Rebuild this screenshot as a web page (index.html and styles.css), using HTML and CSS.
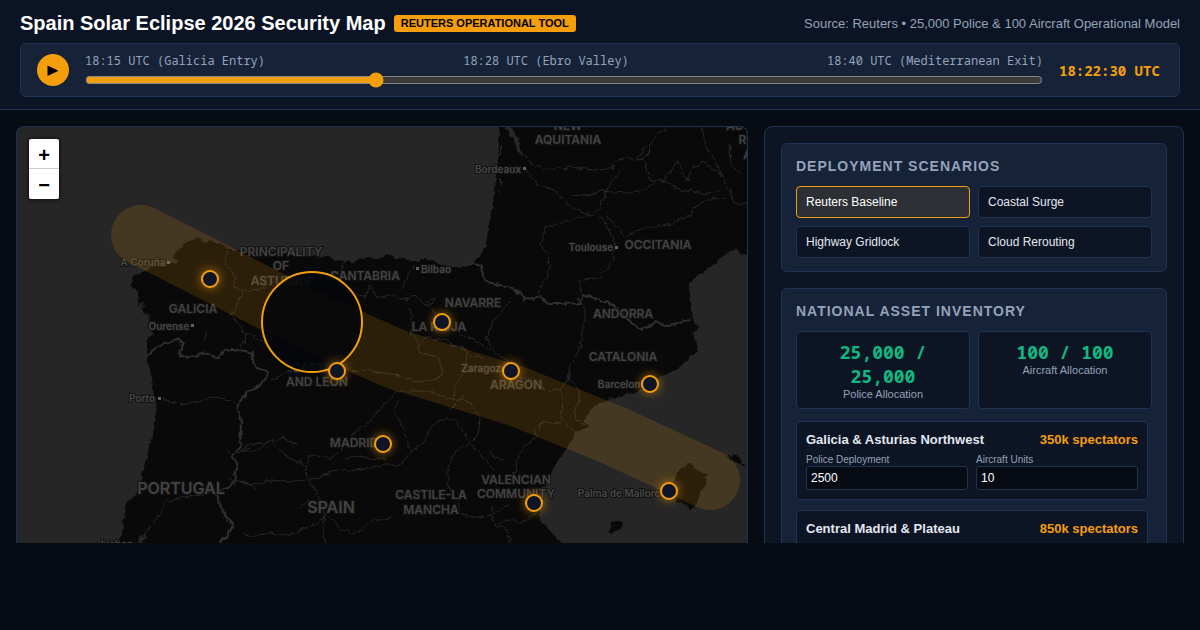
FILE: index.html
```html
<!DOCTYPE html>
<html lang="en">
<head>
<meta charset="utf-8">
<meta name="viewport" content="width=device-width, initial-scale=1">
<title>Spain Solar Eclipse 2026 Security Map</title>
<link rel="stylesheet" href="styles.css">
</head>
<body>
<header class="header">
  <div class="title-row">
    <div class="brand">
      <h1 class="title">Spain Solar Eclipse 2026 Security Map</h1>
      <span class="badge">REUTERS OPERATIONAL TOOL</span>
    </div>
    <p class="source">Source: Reuters • 25,000 Police &amp; 100 Aircraft Operational Model</p>
  </div>
  <div class="timeline">
    <button class="play" type="button" aria-label="Play"><svg width="12" height="12" viewBox="0 0 12 12"><path d="M0.5 1.500v10.500L11.500 6.700z"/></svg></button>
    <div class="track">
      <div class="stops">
        <span>18:15 UTC (Galicia Entry)</span>
        <span>18:28 UTC (Ebro Valley)</span>
        <span>18:40 UTC (Mediterranean Exit)</span>
      </div>
      <input class="slider" type="range" min="0" max="100" value="30" aria-label="Time">
    </div>
    <output class="clock">18:22:30 UTC</output>
  </div>
</header>
<main class="main">
  <section class="map-panel" aria-label="Map">
    <svg class="map" viewBox="17 127 730 480">
      <defs>
        <filter id="rough" x="0" y="0" width="1" height="1" color-interpolation-filters="sRGB">
          <feTurbulence type="fractalNoise" baseFrequency="0.16" numOctaves="2" seed="4"/>
          <feDisplacementMap in="SourceGraphic" scale="6" xChannelSelector="R" yChannelSelector="G"/>
        </filter>
        <filter id="glow" x="-1" y="-1" width="3" height="3"><feGaussianBlur stdDeviation="5"/></filter>
        <g id="pin">
          <circle r="10" class="pin-glow" filter="url(#glow)"/>
          <circle r="8" class="pin-dot"/>
        </g>
      </defs>
      <rect class="water" x="17" y="127" width="730" height="480"/>
      <g filter="url(#rough)">
        <rect x="0" y="100" width="780" height="520" fill="none"/>
        <path class="land" d="M500 110L499 140 498 160 495 182 493 205 490 225 486 243 480 256 473 264 460 267 440 265 433 260 423 258 417 263 407 259 395 258 388 254 378 259 367 258 357 261 343 261 327 257 305 256 270 252 240 252 233 250 217 243 212 239 205 242 200 238 193 240 183 243 180 249 173 255 177 262 171 264 158 265 147 269 143 272 135 275 130 286 138 291 138 306 146 300 141 311 150 316 147 324 152 334 147 340 147 362 150 368 152 388 157 407 152 433 147 457 140 482 137 493 125 505 126 512 123 523 120 540 116 620H590L562 543 552 533 543 523 540 517 539 507 542 490 552 470 557 462 567 450 575 433 589 426 583 422 590 412 598 404 613 398 637 392 650 384 660 377 677 369 690 358 697 350 695 340 693 333 700 328 694 323 693 317 689 302 689 283 697 275 712 267 720 258 736 248 740 254 760 255V110z"/>
        <path class="land" d="M672 482L680 469 690 462 693 467 697 471 707 473 706 483 698 498 692 510 686 505 677 502 677 494 670 492zM725 457L737 455 746 467 738 463zM607 532L612 523 623 521 621 527 612 534z"/>
        <path class="inlet" d="M503 122L512 129 519 140 520 151 528 160 518 153 515 143z"/>
        <path class="inlet" d="M499 176L504 182 500 185zM498 190L501 191 498 194zM137 543L141 535 145 538 141 546zM500 145l2-1v10l-2 1z"/>
        <path class="region" d="M525 158L535 166 543 169 570 167 595 170 612 169 615 161 628 158 637 160 645 159 652 144 657 132 665 132 665 120M637 159L643 149 652 144M645 159L650 180 663 181 672 167 679 162 682 170 687 181 692 168 705 162 712 169 722 175 729 190 736 204 747 204M702 127L706 147 715 160 722 175M527 171L537 184 553 189 565 200 572 208 591 215 600 207 610 183 620 170M572 197L582 195 595 193 606 190M597 191L630 193 645 189 655 182M663 181L680 190 705 194 722 190M589 215L565 222 545 227 541 246 548 255 550 270 545 279 538 293M600 217L607 225 612 236 617 247 610 265 600 277 578 281 583 295M607 217L625 236 642 228 668 225 690 215 697 205 710 199 725 198M730 144L731 166 742 173"/>
        <path class="region" d="M578 299L584 307 584 328 579 352 570 364 568 380 560 390 548 391 540 385 525 378 516 374 508 360 495 353 486 338 493 320 501 313 512 297M560 390L563 402 561 418 567 425 575 432M568 380L578 387 580 398 574 410 577 420 585 426M561 424L545 422 535 428 536 438 523 448 515 463 517 472 508 476M538 430L543 420"/>
        <path class="region" d="M228 250L225 262 235 275 234 287 243 291 237 304 231 315 240 325 246 335 240 350 234 352M243 291L260 289 272 283 283 286M240 330L258 340 285 348M345 260L342 270 331 276 340 282 350 293 365 298 370 285 378 298 390 295 403 300 415 295 420 300M402 290L407 275 415 265M420 300L432 310 440 318 454 328M425 302L435 298 433 305 427 305M454 328L460 335 475 340 490 350M410 309L412 325 411 333 418 342 430 337 450 342 461 348 470 356 485 358M420 343L418 352 440 358 443 370 440 378 420 382 400 376 370 370 350 371M300 364L282 375 272 380M452 344L466 350 467 368 454 385 455 400 425 391 397 391 391 399 377 410 370 421 355 432 350 442 330 458 310 455 306 466M397 400L394 412 402 425 407 440 411 452 400 465 386 465 355 470 330 472 315 479 309 480M455 402L465 398 475 410 480 420 478 435 470 443 462 430 456 420 440 420 428 430 425 442 410 452M470 443L480 455 488 462 494 470M470 443L455 451 448 470 448 485 458 500 460 515 480 518 497 513 510 502M386 460L360 456 345 459M306 466L307 479 290 482 270 480 255 485 240 481 227 479M306 466L285 455 270 440 258 450 243 453M309 480L320 500 325 515 335 522 342 530 360 533 370 520 385 520 390 518M325 516L315 524 290 535 270 533 250 537 243 532M325 516L322 532 326 543M494 507L492 520 498 525 507 520 520 523 540 512M498 526L508 531 510 543M488 450L495 458 505 460M227 452L238 453 250 444 266 443 282 438 297 445M163 399L180 404 205 400 212 396 228 400 238 404M239 452L250 448M207 331L204 341"/>
        <path class="region" d="M231 484L245 481 257 490M144 538L150 526 160 515 167 501 185 498 210 492M309 500L300 508M450 410L465 395"/>
        <path class="border" d="M468 264L480 265 487 282 500 285 515 289 525 300 540 296 548 304 560 304 581 303 583 294 600 300 615 306 625 318 642 330 655 322 668 326 690 319M147 356L158 346 168 343 178 339 183 344 180 356 190 357 205 353 218 358 225 350 240 350 252 353 254 366 268 373 260 385 247 392 238 404 241 420 240 448 232 455 238 465 233 483 228 488 215 492 220 505 228 520 233 525 228 535 220 543 210 560"/>
      </g>
      <g class="labels">
        <g class="region-name">
          <text x="568" y="130">NEW</text><text x="568" y="144">AQUITANIA</text>
          <text x="739" y="130">AUV</text><text x="747" y="144">RH</text><text x="751" y="159">AL</text>
          <text x="658" y="249">OCCITANIA</text><text x="623" y="318">ANDORRA</text>
          <text x="623" y="361">CATALONIA</text><text x="516" y="389">ARAGON</text>
          <text x="473" y="307">NAVARRE</text><text x="439" y="331">LA RIOJA</text>
          <text x="365" y="280">CANTABRIA</text>
          <text x="281" y="256">PRINCIPALITY</text><text x="281" y="270">OF</text><text x="281" y="285">ASTURIAS</text>
          <text x="193" y="313">GALICIA</text>
          <text x="317" y="372">CASTILE</text><text x="317" y="386">AND LEÓN</text>
          <text x="354" y="447">MADRID</text>
          <text x="431" y="499">CASTILE-LA</text><text x="431" y="514">MANCHA</text>
          <text x="516" y="484">VALENCIAN</text><text x="516" y="498">COMMUNITY</text>
        </g>
        <g class="country-name"><text x="181" y="494">PORTUGAL</text><text x="331" y="513">SPAIN</text></g>
        <g class="city-name">
          <text x="498" y="173">Bordeaux</text><text x="591" y="251">Toulouse</text><text x="436" y="273">Bilbao</text>
          <text x="143" y="266">A Coruña</text><text x="169" y="330">Ourense</text><text x="142" y="402">Porto</text>
          <text x="484" y="372">Zaragoza</text><text x="622" y="388">Barcelona</text>
          <text x="622" y="497">Palma de Mallorca</text><text x="117" y="548">Lisbon</text>
        </g>
        <path class="city-dot" d="M523 167h3v3h-3zM615 246h3v3h-3zM416 267h3v3h-3zM167 261h3v3h-3zM191 324h3v3h-3zM158 397h3v3h-3z"/>
      </g>
      <path class="corridor" d="M141 235L312 322 395 359 516 396 615 436 710 480"/>
      <circle class="umbra" cx="312" cy="322" r="50"/>
      <use href="#pin" x="210" y="279"/><use href="#pin" x="442" y="322"/>
      <use href="#pin" x="337" y="371"/><use href="#pin" x="511" y="371"/>
      <use href="#pin" x="650" y="384"/><use href="#pin" x="383" y="444"/>
      <use href="#pin" x="534" y="503"/><use href="#pin" x="669" y="491"/>
    </svg>
    <div class="zoom">
      <button class="zoom-btn" type="button" aria-label="Zoom in">+</button>
      <button class="zoom-btn" type="button" aria-label="Zoom out">−</button>
    </div>
  </section>
  <aside class="side">
    <section class="card">
      <h2 class="card-title">DEPLOYMENT SCENARIOS</h2>
      <div class="pair">
        <button class="scenario active" type="button">Reuters Baseline</button>
        <button class="scenario" type="button">Coastal Surge</button>
        <button class="scenario" type="button">Highway Gridlock</button>
        <button class="scenario" type="button">Cloud Rerouting</button>
      </div>
    </section>
    <section class="card">
      <h2 class="card-title">NATIONAL ASSET INVENTORY</h2>
      <div class="pair">
        <div class="metric"><div class="metric-value">25,000 / 25,000</div><div class="metric-label">Police Allocation</div></div>
        <div class="metric"><div class="metric-value">100 / 100</div><div class="metric-label">Aircraft Allocation</div></div>
      </div>
      <div class="zones">
        <article class="zone">
          <div class="zone-head"><h3 class="zone-name">Galicia &amp; Asturias Northwest</h3><span class="crowd">350k spectators</span></div>
          <div class="pair">
            <label class="field">Police Deployment<input class="box" type="text" inputmode="numeric" value="2500"></label>
            <label class="field">Aircraft Units<input class="box" type="text" inputmode="numeric" value="10"></label>
          </div>
        </article>
        <article class="zone">
          <div class="zone-head"><h3 class="zone-name">Central Madrid &amp; Plateau</h3><span class="crowd">850k spectators</span></div>
        </article>
      </div>
    </section>
  </aside>
</main>
</body>
</html>
```

FILE: styles.css
```css
:root {
  color-scheme: dark;
  --bg: #070b13;
  --panel: #0d1424;
  --card: #162238;
  --line: #1e3354;
  --muted: #94a3b8;
  --amber: #f59e0b;
  --mono: "Noto Sans Mono", "DejaVu Sans Mono", monospace;
}
* { box-sizing: border-box; margin: 0; }
body {
  display: flex;
  flex-direction: column;
  height: 100vh;
  padding-bottom: 87px;
  overflow: hidden;
  background: var(--bg);
  color: #e2e8f0;
  font-family: "Liberation Sans", Arial, sans-serif;
}
button, input { font-family: inherit; }

.header {
  display: flex;
  flex-direction: column;
  gap: 8px;
  padding: 12px 20px;
  background: #0b1424;
  border-bottom: 1px solid var(--line);
}
.title-row, .brand { display: flex; align-items: center; }
.title-row { justify-content: space-between; }
.brand { gap: 8px; }
.title { font-size: 20px; line-height: 23px; color: #fff; }
.badge {
  padding: 2px 7px;
  border-radius: 3px;
  background: var(--amber);
  color: #000;
  font-size: 11px;
  font-weight: 700;
  line-height: 13px;
}
.source { color: var(--muted); font-size: 13px; line-height: 16px; }

.timeline {
  display: flex;
  align-items: center;
  gap: 16px;
  padding: 8px 16px;
  border: 1px solid var(--line);
  border-radius: 6px;
  background: var(--card);
}
.play {
  display: flex;
  align-items: center;
  justify-content: center;
  width: 32px;
  height: 32px;
  padding: 0;
  border: 0;
  border-radius: 50%;
  background: var(--amber);
}
.track { display: flex; flex: 1; flex-direction: column; gap: 2px; }
.stops {
  display: flex;
  justify-content: space-between;
  color: var(--muted);
  font-family: var(--mono);
  font-size: 12px;
  line-height: 18px;
}
.slider { width: 100%; height: 16px; accent-color: var(--amber); }
.clock {
  min-width: 104px;
  padding-top: 2px;
  color: var(--amber);
  font-family: var(--mono);
  font-size: 14px;
  font-weight: 700;
  line-height: 20px;
}

.main {
  display: grid;
  flex: 1 1 0;
  grid-template-columns: minmax(0, 1fr) 420px;
  gap: 16px;
  min-height: 0;
  padding: 16px 16px 0;
  overflow: hidden;
}
.map-panel, .side { border: 1px solid var(--line); border-radius: 8px; }
.map-panel { position: relative; overflow: hidden; background: #262626; border-bottom: 0; border-radius: 8px 8px 0 0; }
.map { display: block; width: 100%; }
.water { fill: #262626; }
.land { fill: #090909; }
.inlet { fill: #262626; }
.region { fill: none; stroke: #272727; stroke-width: 1; }
.border { fill: none; stroke: #303030; stroke-width: 2; stroke-linejoin: round; }
.labels {
  fill: #424242;
  stroke: #121212;
  stroke-width: 2;
  paint-order: stroke;
  font-family: Inter, sans-serif;
  font-weight: 600;
  text-anchor: middle;
}
.region-name { font-size: 12px; }
.country-name { font-size: 16px; }
.city-name { font-size: 10px; fill: #484848; }
.city-dot { fill: #606060; stroke: none; }
.corridor {
  fill: none;
  stroke: var(--amber);
  stroke-width: 60;
  stroke-linecap: round;
  stroke-linejoin: round;
  opacity: 0.15;
}
.umbra { fill: #04060b; fill-opacity: 0.85; stroke: var(--amber); stroke-width: 2; }
.pin-glow { fill: var(--amber); opacity: 0.5; }
.pin-dot { fill: #0d1527; stroke: var(--amber); stroke-width: 2; }

.zoom {
  position: absolute;
  top: 12px;
  left: 12px;
  width: 30px;
  overflow: hidden;
  border-radius: 2px;
  box-shadow: 0 0 3px 1px #111;
}
.zoom-btn {
  display: block;
  width: 30px;
  height: 30px;
  padding: 0;
  border: 0;
  background: #fff;
  color: #000;
  font: 700 20px/32px "Liberation Sans", Arial, sans-serif;
}
.zoom-btn:first-child { border-bottom: 1px solid #ccc; }

.side {
  display: flex;
  flex-direction: column;
  gap: 16px;
  padding: 16px;
  background: var(--panel);
}
.card {
  padding: 14px 14px 13px;
  border: 1px solid var(--line);
  border-radius: 6px;
  background: var(--card);
}
.card-title {
  margin-bottom: 12px;
  color: var(--muted);
  font-size: 14px;
  letter-spacing: 1px;
  line-height: 16px;
}
.pair { display: grid; grid-template-columns: 1fr 1fr; gap: 8px; }
.scenario {
  height: 32px;
  padding: 0 9px;
  border: 1px solid var(--line);
  border-radius: 4px;
  background: var(--panel);
  color: #e2e8f0;
  font-size: 12px;
  text-align: left;
}
.scenario.active { border-color: var(--amber); background: #2c2f34; color: #fff; }
.metric {
  padding: 8px;
  border: 1px solid var(--line);
  border-radius: 4px;
  background: var(--panel);
  text-align: center;
}
.metric-value {
  color: #10b981;
  font-family: var(--mono);
  font-size: 18px;
  font-weight: 700;
  line-height: 24px;
}
.metric-label { color: var(--muted); font-size: 11px; line-height: 12px; }
.zones {
  display: flex;
  flex-direction: column;
  gap: 10px;
  margin-top: 12px;
  padding-right: 4px;
}
.zone {
  padding: 9px;
  border: 1px solid var(--line);
  border-radius: 4px;
  background: var(--panel);
}
.zone:last-child { min-height: 79px; }
.zone-head {
  display: flex;
  justify-content: space-between;
  margin-bottom: 4px;
  font-size: 13px;
  font-weight: 700;
  line-height: 18px;
}
.zone-name { font-size: 13px; }
.crowd { color: var(--amber); }
.field { color: var(--muted); font-size: 10px; line-height: 13px; }
.box {
  display: block;
  width: 100%;
  height: 24px;
  padding: 0 4px;
  border: 1px solid var(--line);
  border-radius: 3px;
  background: var(--bg);
  color: #fff;
  font-size: 12px;
}
```
